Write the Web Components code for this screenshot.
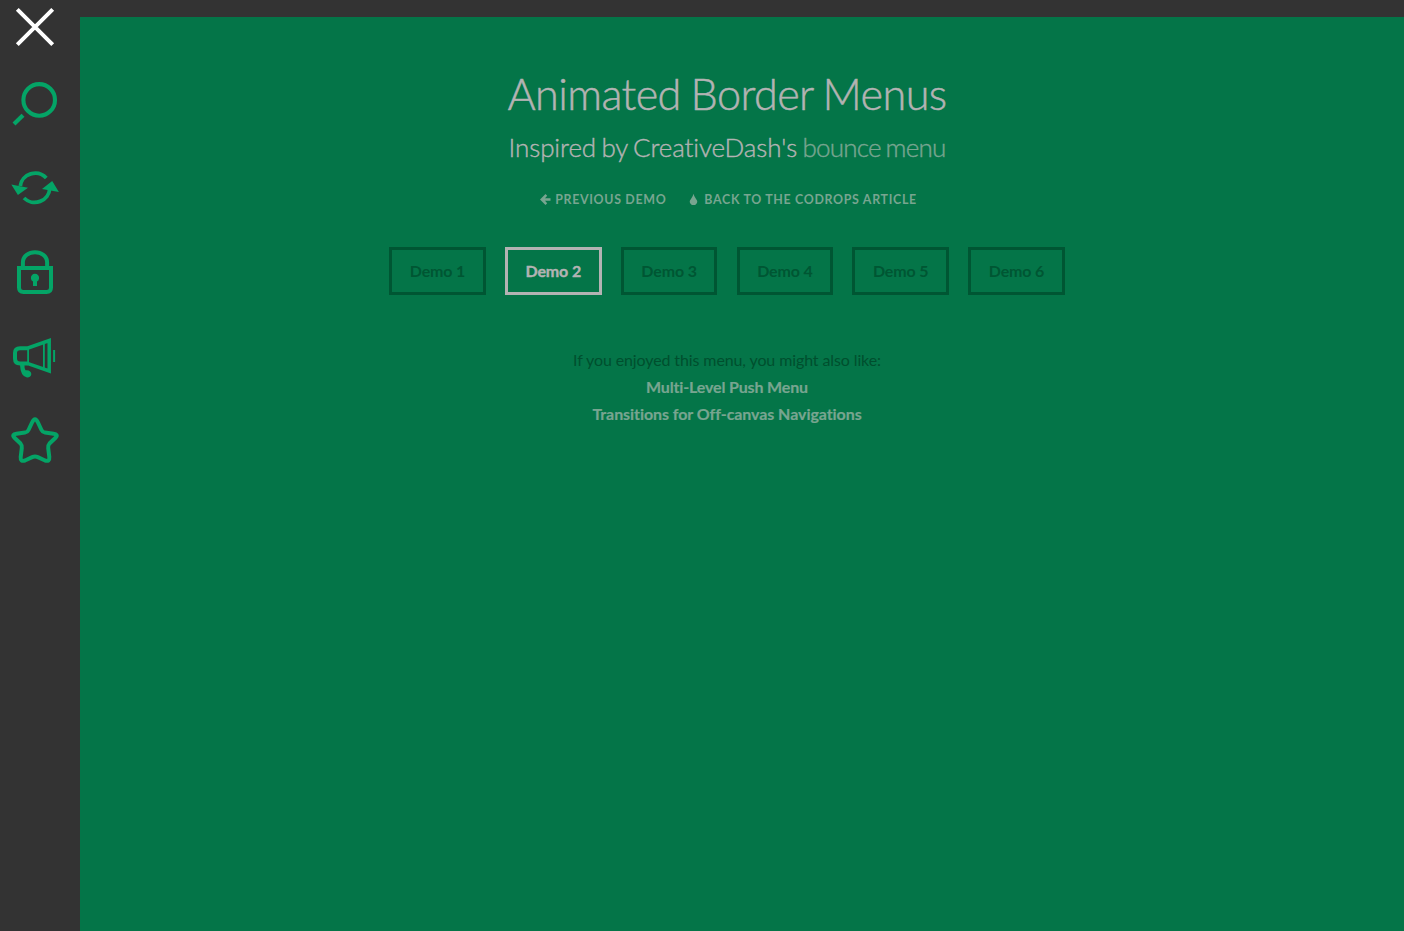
<!DOCTYPE html>
<html lang="en">
<head>
<meta charset="utf-8">
<title>Animated Border Menus</title>
<style>
html, body { margin: 0; height: 100%; overflow: hidden; background: #333; }
body { font-family: Lato, "Liberation Sans", sans-serif; }
</style>
</head>
<body>
<border-menu-app>
  <side-menu slot="menu">
    <menu-icon name="close"></menu-icon>
    <menu-icon name="search"></menu-icon>
    <menu-icon name="refresh"></menu-icon>
    <menu-icon name="lock"></menu-icon>
    <menu-icon name="megaphone"></menu-icon>
    <menu-icon name="star"></menu-icon>
  </side-menu>
  <page-header></page-header>
  <demo-nav>
    <demo-link>Demo 1</demo-link>
    <demo-link current>Demo 2</demo-link>
    <demo-link>Demo 3</demo-link>
    <demo-link>Demo 4</demo-link>
    <demo-link>Demo 5</demo-link>
    <demo-link>Demo 6</demo-link>
  </demo-nav>
  <related-links></related-links>
</border-menu-app>
<script>
class Base extends HTMLElement {
  constructor() {
    super();
    this.attachShadow({ mode: 'open' }).innerHTML = this.render();
  }
}

customElements.define('border-menu-app', class extends Base {
  render() {
    return `<style>
      :host { display: grid; grid-template-columns: 80px 1fr; height: 100vh; background: #333; }
      main { margin-top: 17px; background: #047548; padding: 52px 30px 0 0; box-sizing: border-box; display: flex; flex-direction: column; align-items: center; }
    </style><slot name="menu"></slot><main><slot></slot></main>`;
  }
});

customElements.define('side-menu', class extends Base {
  render() {
    return `<style>
      :host { display: flex; flex-direction: column; width: 70px; }
    </style><slot></slot>`;
  }
});

const ICONS = {
  close: [55, '<path d="M17.3 9.3 52.7 44.7M52.7 9.3 17.3 44.7" stroke="#fff" stroke-width="4"/>'],
  search: [91, '<circle cx="39.2" cy="44.9" r="15.8" stroke-width="4.1"/><path d="M14 68.9 23 60.2" stroke-width="4.2"/>'],
  refresh: [84, '<path d="M20.3 40A15 14.5 0 0 1 46.3 32M49.7 42.5A15 14.5 0 0 1 24 52" stroke-width="3.8"/><path class="f" d="M11.3 38.5 28 41.7 17.9 48.9ZM52.2 34.9 58.9 46 42 43Z"/>'],
  lock: [85, '<path d="M22.9 37V32.5C22.9 18.8 47.1 18.8 47.1 32.5V37" stroke-width="4"/><path d="M19 38H51V57.5Q51 62 46.5 62H23.5Q19 62 19 57.5Z" stroke-width="4"/><path class="f" d="M33 56V51.5A4.1 4.1 0 1 1 37 51.5V56Z"/>'],
  megaphone: [85, '<path d="M28 33.2H20Q15 33.2 15 38V43.5Q15 48.5 20 48.5H28" stroke-width="4"/><path d="M28 33 49.2 25.5V56L28 48.7" stroke-width="3.5"/><path d="M28.1 32V49M43.9 27V54" stroke-width="1.8"/><path d="M54.1 35V47" stroke-width="2"/><path class="f" d="M20 50H24.5Q24.2 53 25.5 55.3C29 54.6 31.3 56.600 31.300 59C31.300 61.200 29.500 62.500 27 62.400Q20.500 61.500 20 50Z"/>'],
  star: [80, '<path d="M35 19.3Q36.5 19.3 38.2 23L41.5 30Q42.5 32.2 45 32.6L53.5 33.7Q58.5 34.5 55.8 37.5L49.5 43.5Q47.8 45.5 48.2 48L49.3 57Q49.8 62 45 60.5L37.8 57.1Q35 56 32.2 57.1L25 60.5Q20.2 62 20.7 57L21.8 48Q22.2 45.5 20.5 43.5L14.2 37.5Q11.5 34.5 16.5 33.7L25 32.6Q27.5 32.2 28.5 30L31.8 23Q33.5 19.3 35 19.3Z" stroke-width="4"/>']
};
customElements.define('menu-icon', class extends HTMLElement {
  connectedCallback() {
    const [h, art] = ICONS[this.getAttribute('name')];
    this.attachShadow({ mode: 'open' }).innerHTML = `<style>
      :host { display: block; width: 70px; height: ${h}px; }
      svg { display: block; fill: none; stroke: #04a466; }
      .f { fill: #04a466; stroke: none; }
    </style><svg width="70" height="${h}" viewBox="0 0 70 ${h}" overflow="visible">${art}</svg>`;
  }
});

customElements.define('page-header', class extends Base {
  render() {
    return `<style>
      :host { display: block; text-align: center; color: #b3b3b3; }
      h1 { margin: 0; font-weight: 300; font-size: 43.2px; line-height: 48px; letter-spacing: -0.57px; word-spacing: -1.5px; white-space: nowrap; -webkit-text-stroke: 0.5px currentColor; }
      .sub { display: block; margin-top: 12px; font-size: 26px; line-height: 36px; letter-spacing: -0.12px; -webkit-text-stroke-width: 0.4px; }
      a { color: #78a590; }
      .sub a { letter-spacing: -0.8px; }
      nav { display: flex; justify-content: center; gap: 23px; margin: 24px 0 0 3px; font-size: 12.4px; line-height: 20px; font-weight: 700; letter-spacing: 0.68px; text-transform: uppercase; }
      nav a { display: flex; align-items: center; gap: 4px; white-space: nowrap; }
      nav a + a { gap: 6px; }
      nav span { padding-top: 1px; margin-bottom: -1px; }
      svg { display: block; fill: #78a590; }
    </style>
    <h1>Animated Border Menus<span class="sub">Inspired by CreativeDash's <a>bounce menu</a></span></h1>
    <nav>
      <a><svg width="11" height="12" viewBox="0 0 11 12"><path d="M0 6.5 5.5 1 7.2 2.7 5 5.2H10.5V7.8H5L7.2 10.3 5.5 12Z"/></svg><span>Previous Demo</span></a>
      <a><svg width="9" height="12" viewBox="0 0 9 12"><path d="M4.5 .8Q5 3.5 7.2 6.2A3.6 3.6 0 1 1 1.8 6.2Q4 3.5 4.5 .8Z"/></svg><span>Back to the Codrops Article</span></a>
    </nav>`;
  }
});

customElements.define('demo-nav', class extends Base {
  render() {
    return `<style>:host { display: flex; gap: 19.3px; margin-top: 38px; }</style><slot></slot>`;
  }
});

customElements.define('demo-link', class extends Base {
  render() {
    return `<style>
      :host { display: block; box-sizing: border-box; width: 96.5px; height: 48px; border: 3px solid #005633; color: #005633; text-align: center; font-size: 16px; line-height: 42px; font-weight: 700; letter-spacing: -0.15px; white-space: nowrap; }
      :host([current]) { border-color: #b3b3b3; color: #b3b3b3; -webkit-text-stroke: 0.4px currentColor; }
    </style><slot></slot>`;
  }
});

customElements.define('related-links', class extends Base {
  render() {
    return `<style>
      :host { display: block; margin-top: 51px; text-align: center; color: #004f2e; font-size: 16px; line-height: 27px; letter-spacing: -0.11px; }
      p { margin: 0; }
      a { display: block; font-weight: 700; color: #78a590; letter-spacing: -0.15px; -webkit-text-stroke: 0.2px currentColor; }
      a + a { letter-spacing: -0.07px; }
    </style>
    <p>If you enjoyed this menu, you might also like:</p>
    <a>Multi-Level Push Menu</a>
    <a>Transitions for Off-canvas Navigations</a>`;
  }
});
</script>
</body>
</html>
